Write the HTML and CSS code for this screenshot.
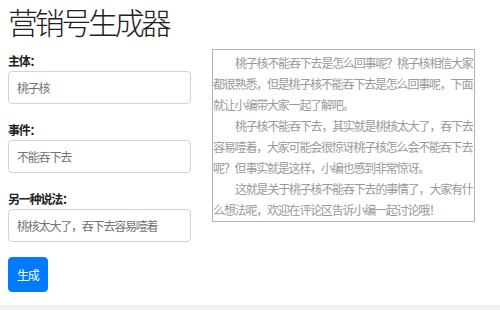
FILE: index.html
```html
<!DOCTYPE html>
<html lang="zh-CN">
<head>
    <meta charset="UTF-8">
    <meta name="viewport" content="width=device-width, initial-scale=1.0">
    <title>营销号生成器</title>
    <link rel="stylesheet" href="styles.css">
</head>
<body>
    <div class="page">
        <h1 class="title">营销号生成器</h1>

        <div class="main">
            <!-- Form -->
            <form class="gen-form">
                <div class="field">
                    <label for="subject">主体：</label>
                    <input type="text" id="subject" placeholder="桃子核">
                </div>
                <div class="field">
                    <label for="event">事件：</label>
                    <input type="text" id="event" placeholder="不能吞下去">
                </div>
                <div class="field">
                    <label for="other">另一种说法：</label>
                    <input type="text" id="other" placeholder="桃核太大了，吞下去容易噎着">
                </div>
                <button type="button" class="btn">生成</button>
            </form>

            <!-- Output -->
            <div class="output">
                <p>桃子核不能吞下去是怎么回事呢？桃子核相信大家都很熟悉，但是桃子核不能吞下去是怎么回事呢，下面就让小编带大家一起了解吧。</p>
                <p>桃子核不能吞下去，其实就是桃核太大了，吞下去容易噎着，大家可能会很惊讶桃子核怎么会不能吞下去呢？但事实就是这样，小编也感到非常惊讶。</p>
                <p>这就是关于桃子核不能吞下去的事情了，大家有什么想法呢，欢迎在评论区告诉小编一起讨论哦！</p>
            </div>
        </div>
    </div>

    <footer class="footer"></footer>
</body>
</html>
```

FILE: styles.css
```css
/* Global styles */
body {
    font-family: "Noto Sans CJK SC", "Liberation Sans", sans-serif;
    margin: 0;
    padding: 0;
    background-color: #fff;
    color: #212529;
}

.page {
    padding: 0 8px;
}

/* Title */
.title {
    margin: 0;
    font-size: 30px;
    font-weight: 300;
    line-height: 42px;
    letter-spacing: -3.3px;
    color: #222;
}

.main {
    display: flex;
    gap: 21px;
}

/* Form */
.gen-form {
    width: 183px;
    padding-top: 10px;
}

.field {
    margin-bottom: 17px;
}

label {
    display: block;
    font-size: 12px;
    font-weight: bold;
    line-height: 18px;
    letter-spacing: -1.2px;
    margin-bottom: 1px;
    color: #222;
}

input {
    display: block;
    width: 100%;
    height: 33px;
    padding: 0 8px;
    box-sizing: border-box;
    border: 1px solid #ced4da;
    border-radius: 4px;
    font-family: inherit;
    font-size: 12px;
    letter-spacing: -1.2px;
    color: #495057;
}

input::placeholder {
    color: #6c757d;
}

.field:last-of-type {
    margin-bottom: 15px;
}

/* Button */
.btn {
    height: 35px;
    padding: 0 8px;
    background-color: #007bff;
    color: #fff;
    border: 1px solid #007bff;
    border-radius: 4px;
    font-family: inherit;
    font-size: 12px;
    letter-spacing: -1.2px;
    cursor: pointer;
}

/* Output box */
.output {
    margin-top: 7px;
    width: 263px;
    height: 173px;
    box-sizing: border-box;
    padding: 2px 0 1px;
    border: 1px solid #b4b4b4;
    font-size: 12px;
    line-height: 21px;
    letter-spacing: -1.2px;
    color: #999;
}

.output p {
    margin: 0;
    text-indent: 22px;
}

/* Footer */
.footer {
    margin-top: 13px;
    height: 8px;
    background-color: #f2f2f2;
}
```
